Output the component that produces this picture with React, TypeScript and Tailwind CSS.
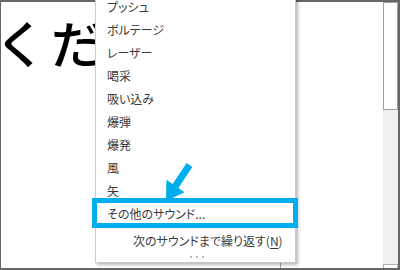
const font = "font-['Noto_Sans_CJK_JP','Noto_Sans',sans-serif]";

const items = ["プッシュ", "ボルテージ", "レーザー", "喝采", "吸い込み", "爆弾", "爆発", "風", "矢", "その他のサウンド..."];

function SoundMenu() {
  return (
    <div className="absolute left-[95px] top-[-6px] w-[201px] h-[269px] bg-white border border-[#cbcbcb] shadow-[2px_2px_3px_rgba(0,0,0,0.28)] flex flex-col">
      {items.map(t => (
        <div key={t} className="h-[23px] flex items-center pl-[11px] text-[12px] text-[#3a3a3a] [font-feature-settings:'palt']">
          {t}
        </div>
      ))}
      <div className="mt-[4px] h-[23px] flex items-center pl-[37px] text-[12px] text-[#3a3a3a] [font-feature-settings:'palt']">
        次のサウンドまで繰り返す(<span className="underline underline-offset-2">N</span>)
      </div>
      <div className="flex-1 flex items-center justify-center gap-[4px] pl-[2px]">
        <span className="w-[2px] h-[2px] bg-[#b8b8b8]" />
        <span className="w-[2px] h-[2px] bg-[#b8b8b8]" />
        <span className="w-[2px] h-[2px] bg-[#b8b8b8]" />
      </div>
    </div>
  );
}

export default function App() {
  return (
    <div className={`relative w-[400px] h-[270px] overflow-hidden bg-white ${font}`}>
      <div className="h-[270px] flex border-t-2 border-l border-r-2 border-b-2 border-[#666]">
        <div className="relative flex-1">
          <div className="w-[94px] overflow-hidden pt-[15px]">
            <div className="-ml-[6px] text-[51px] tracking-[5px] leading-none font-medium text-black whitespace-nowrap">
              くだ
            </div>
          </div>
          <div className="absolute left-[279px] bottom-0 w-px h-[5px] bg-[#a0a0a0]" />
        </div>
        <div className="w-[15px] flex flex-col bg-[#f0f0f0]">
          <div className="h-[108px] bg-white border border-[#a0a0a0]" />
          <div className="flex-1" />
          <div className="h-[4px] bg-white border-t border-x border-[#b0b0b0]" />
        </div>
      </div>

      <SoundMenu />

      {/* annotation highlight */}
      <div className="absolute left-[92px] top-[198px] w-[206px] h-[30px] border-[5px] border-[#00aeef]" />
      <svg className="absolute left-0 top-0" width="400" height="270" viewBox="0 0 400 270">
        <polygon
          fill="#00aeef"
          points="186.6,163 192.4,167 178.4,188 184.6,192.2 166,201 166.4,179.8 172.6,184"
        />
      </svg>
    </div>
  );
}
